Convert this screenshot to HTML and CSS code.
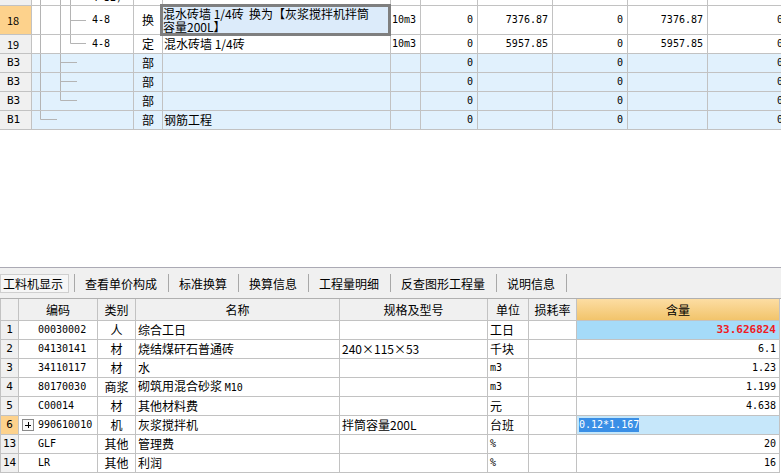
FILE: index.html
```html
<!DOCTYPE html>
<html lang="zh-CN">
<head>
<meta charset="utf-8">
<title>工料机显示</title>
<link rel="stylesheet" href="styles.css">
</head>
<body>
<div class="app">
  <div class="top">
    <div class="tgrid">
      <!-- partial row -->
      <div class="rh"></div>
      <div class="code low"><svg class="tree" width="60" height="5"><path d="M8.5 0V5M28.5 0V5M38.5 0V5"/></svg><span class="n">4-32)</span></div>
      <div></div>
      <div></div>
      <div></div><div></div><div></div><div></div><div></div><div></div>

      <!-- row 18 -->
      <div class="rh sel">18</div>
      <div class="code"><svg class="tree" width="60" height="28"><path d="M8.5 0V28M28.5 0V28M38.5 0V28M38.5 14.5H54"/></svg><span class="n">4-8</span></div>
      <div class="ctr">换</div>
      <div class="edit-host"><div class="editor">混水砖墙 1/4砖  换为【灰浆搅拌机拌筒<br>容量200L】</div></div>
      <div class="unit n">10m3</div>
      <div class="num n">0</div>
      <div class="num n">7376.87</div>
      <div class="num n">0</div>
      <div class="num n">7376.87</div>
      <div class="num n">0</div>

      <!-- row 19 -->
      <div class="rh">19</div>
      <div class="code"><svg class="tree" width="60" height="18"><path d="M8.5 0V18M28.5 0V18M38.5 0V8.5M38.5 8.5H54"/></svg><span class="n">4-8</span></div>
      <div class="ctr">定</div>
      <div class="name"><span>混水砖墙 1/4砖</span></div>
      <div class="unit n">10m3</div>
      <div class="num n">0</div>
      <div class="num n">5957.85</div>
      <div class="num n">0</div>
      <div class="num n">5957.85</div>
      <div class="num n">0</div>

      <!-- B3 -->
      <div class="rh n">B3</div>
      <div class="code blue"><svg class="tree" width="60" height="18"><path d="M8.5 0V18M28.5 0V18M28.5 8.5H45"/></svg></div>
      <div class="ctr blue">部</div>
      <div class="blue"></div>
      <div class="blue"></div>
      <div class="num n blue">0</div>
      <div class="blue"></div>
      <div class="num n blue">0</div>
      <div class="blue"></div>
      <div class="num n blue">0</div>

      <div class="rh n">B3</div>
      <div class="code blue"><svg class="tree" width="60" height="18"><path d="M8.5 0V18M28.5 0V18M28.5 8.5H45"/></svg></div>
      <div class="ctr blue">部</div>
      <div class="blue"></div>
      <div class="blue"></div>
      <div class="num n blue">0</div>
      <div class="blue"></div>
      <div class="num n blue">0</div>
      <div class="blue"></div>
      <div class="num n blue">0</div>

      <div class="rh n">B3</div>
      <div class="code blue"><svg class="tree" width="60" height="18"><path d="M8.5 0V18M28.5 0V8.5M28.5 8.5H45"/></svg></div>
      <div class="ctr blue">部</div>
      <div class="blue"></div>
      <div class="blue"></div>
      <div class="num n blue">0</div>
      <div class="blue"></div>
      <div class="num n blue">0</div>
      <div class="blue"></div>
      <div class="num n blue">0</div>

      <!-- B1 -->
      <div class="rh n">B1</div>
      <div class="code blue"><svg class="tree" width="60" height="18"><path d="M8.5 0V8.5M8.5 8.5H25"/></svg></div>
      <div class="ctr blue">部</div>
      <div class="name blue">钢筋工程</div>
      <div class="blue"></div>
      <div class="num n blue">0</div>
      <div class="blue"></div>
      <div class="num n blue">0</div>
      <div class="blue"></div>
      <div class="num n blue">0</div>
    </div>
  </div>

  <div class="spacer"></div>

  <div class="tabs">
    <div class="tab first">工料机显示</div>
    <div class="sep"></div>
    <div class="tab">查看单价构成</div>
    <div class="sep"></div>
    <div class="tab">标准换算</div>
    <div class="sep"></div>
    <div class="tab">换算信息</div>
    <div class="sep"></div>
    <div class="tab">工程量明细</div>
    <div class="sep"></div>
    <div class="tab">反查图形工程量</div>
    <div class="sep"></div>
    <div class="tab">说明信息</div>
    <div class="sep"></div>
  </div>

  <div class="bgrid">
    <div class="hd"></div>
    <div class="hd">编码</div>
    <div class="hd">类别</div>
    <div class="hd">名称</div>
    <div class="hd">规格及型号</div>
    <div class="hd">单位</div>
    <div class="hd">损耗率</div>
    <div class="hd amt">含量</div>

    <div class="no n">1</div>
    <div class="bc n">00030002</div>
    <div class="ctr">人</div>
    <div class="txt">综合工日</div>
    <div class="txt"></div>
    <div class="txt">工日</div>
    <div></div>
    <div class="val n hot">33.626824</div>

    <div class="no n">2</div>
    <div class="bc n">04130141</div>
    <div class="ctr">材</div>
    <div class="txt">烧结煤矸石普通砖</div>
    <div class="txt">240×115×53</div>
    <div class="txt">千块</div>
    <div></div>
    <div class="val n">6.1</div>

    <div class="no n">3</div>
    <div class="bc n">34110117</div>
    <div class="ctr">材</div>
    <div class="txt">水</div>
    <div class="txt"></div>
    <div class="txt n">m3</div>
    <div></div>
    <div class="val n">1.23</div>

    <div class="no n">4</div>
    <div class="bc n">80170030</div>
    <div class="ctr">商浆</div>
    <div class="txt"><span>砌筑用混合砂浆 <span class="n">M10</span></span></div>
    <div class="txt"></div>
    <div class="txt n">m3</div>
    <div></div>
    <div class="val n">1.199</div>

    <div class="no n">5</div>
    <div class="bc n">C00014</div>
    <div class="ctr">材</div>
    <div class="txt">其他材料费</div>
    <div class="txt"></div>
    <div class="txt">元</div>
    <div></div>
    <div class="val n">4.638</div>

    <div class="no n sel">6</div>
    <div class="bc plus n"><svg class="pbox" width="12" height="12"><rect x="0.5" y="0.5" width="11" height="11" fill="#fafafa" stroke="#8a8a8a"/><path d="M3 6H9M6 3V9" stroke="#000" stroke-width="1" shape-rendering="crispEdges"/></svg>990610010</div>
    <div class="ctr">机</div>
    <div class="txt">灰浆搅拌机</div>
    <div class="txt">拌筒容量200L</div>
    <div class="txt">台班</div>
    <div></div>
    <div class="editv n"><span class="hl">0.12*1.167</span></div>

    <div class="no n">13</div>
    <div class="bc n">GLF</div>
    <div class="ctr">其他</div>
    <div class="txt">管理费</div>
    <div class="txt"></div>
    <div class="txt n">%</div>
    <div></div>
    <div class="val n">20</div>

    <div class="no n">14</div>
    <div class="bc n">LR</div>
    <div class="ctr">其他</div>
    <div class="txt">利润</div>
    <div class="txt"></div>
    <div class="txt n">%</div>
    <div></div>
    <div class="val n">16</div>
  </div>
</div>
</body>
</html>
```
FILE: styles.css
```css
html, body {
  margin: 0;
  padding: 0;
  background: #ffffff;
}
body {
  width: 781px;
  height: 473px;
  overflow: hidden;
  font-family: "Noto Sans CJK SC", "Noto Sans", sans-serif;
  font-size: 12px;
  color: #000;
}
.app {
  display: flex;
  flex-direction: column;
  width: 781px;
  height: 473px;
}
.n {
  font-family: "DejaVu Sans Mono", "Liberation Mono", monospace;
  font-size: 10px;
}

/* ---------- top grid ---------- */
.top {
  height: 130px;
  overflow: hidden;
  flex: none;
}
.tgrid {
  display: grid;
  grid-template-columns: 32px 102px 29px 228px 30px 57px 75px 75px 80px 80px;
  grid-template-rows: 6px 29px 19px 19px 19px 19px 19px;
  width: 788px;
}
.tgrid > div {
  box-sizing: border-box;
  border-right: 1px solid #c2c2c2;
  border-bottom: 1px solid #c2c2c2;
  display: flex;
  align-items: center;
  overflow: hidden;
  white-space: nowrap;
  line-height: 14px;
  background: #fff;
}
.tgrid > .rh {
  background: #f0f0f0;
  padding-left: 7px;
  font-size: 11px;
}
.tgrid > .rh.sel {
  background: #fdd28c;
}
.tgrid > .blue {
  background: #e1f1fd;
}
.tgrid > .low {
  align-items: flex-end;
}
.tgrid > .code {
  padding: 0;
}
.tree {
  flex: none;
  display: block;
  align-self: flex-start;
}
.tree path {
  stroke: #b4b4b4;
  stroke-width: 1;
  fill: none;
}
.tgrid > .ctr {
  justify-content: center;
}
.tgrid > .name {
  padding-left: 1px;
  white-space: pre;
}
.tgrid > .unit {
  padding-left: 1px;
}
.tgrid > .num {
  justify-content: flex-end;
  padding-right: 4px;
}
.tgrid > .edit-host {
  position: relative;
  overflow: visible;
}
.editor {
  position: absolute;
  left: -3px;
  top: -2px;
  width: 231px;
  height: 32px;
  box-sizing: border-box;
  border: 3px solid #7f7f7f;
  background: #dcebfa;
  padding: 0;
  line-height: 13px;
  white-space: pre;
  overflow: hidden;
  z-index: 2;
}

/* ---------- spacer ---------- */
.spacer {
  height: 137px;
  flex: none;
}

/* ---------- tabs ---------- */
.tabs {
  flex: none;
  height: 30px;
  border-top: 1px solid #abaab4;
  background: #f0f0f0;
  display: flex;
  align-items: center;
}
.tab {
  padding: 0 11px 0 10px;
  line-height: 17px;
  white-space: nowrap;
}
.tab.first {
  box-sizing: border-box;
  width: 69px;
  height: 19px;
  padding: 0 0 0 2px;
  margin-right: 5px;
  border: 1px solid #cfcfcf;
  background: #f6f6f6;
  display: flex;
  align-items: center;
}
.sep {
  width: 1px;
  height: 18px;
  background: #a8a8a8;
  flex: none;
}

/* ---------- bottom grid ---------- */
.bgrid {
  flex: none;
  border-top: 1px solid #b0b0b0;
  display: grid;
  grid-template-columns: 19px 79px 38px 204px 148px 41px 48px 203px;
  grid-template-rows: 22px repeat(8, 19px);
}
.bgrid > div {
  box-sizing: border-box;
  border-right: 1px solid #c2c2c2;
  border-bottom: 1px solid #c2c2c2;
  display: flex;
  align-items: center;
  overflow: hidden;
  white-space: nowrap;
  line-height: 14px;
  background: #fff;
}
.bgrid > .hd {
  background: #f0f0f0;
  justify-content: center;
}
.bgrid > .hd.amt {
  background: linear-gradient(#fcdda3, #f2c46b);
}
.bgrid > .no {
  background: #f0f0f0;
  justify-content: center;
  border-left: 1px solid #c2c2c2;
  font-size: 11px;
}
.bgrid > .hd:first-child {
  border-left: 1px solid #c2c2c2;
}
.bgrid > .no.sel {
  background: #fdd28c;
}
.bgrid > .bc {
  padding-left: 19px;
}
.bgrid > .bc.plus {
  padding-left: 3px;
}
.pbox {
  flex: none;
  margin-right: 4px;
}
.bgrid > .ctr {
  justify-content: center;
}
.bgrid > .txt {
  padding-left: 2px;
  white-space: pre;
}
.bgrid > .val {
  justify-content: flex-end;
  padding-right: 3px;
}
.bgrid > .val.hot {
  background: #a5dbf9;
  color: #ef1a1f;
  font-weight: bold;
  font-size: 11px;
}
.bgrid > .editv {
  background: #c6e7fa;
  padding-left: 2px;
}
.hl {
  background: #3a8fe6;
  color: #fff;
  line-height: 14px;
}
```
